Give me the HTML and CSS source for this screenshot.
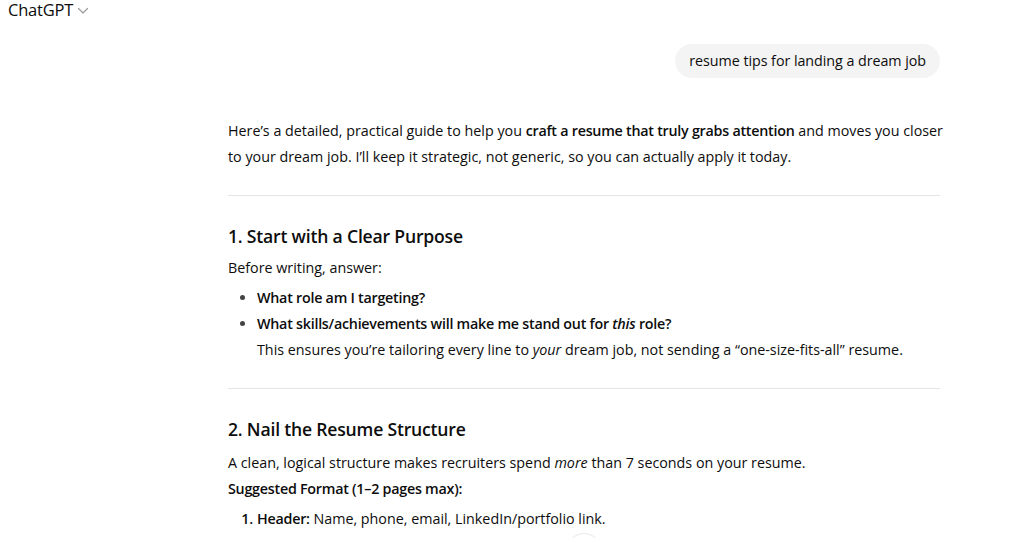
FILE: index.html
```html
<!DOCTYPE html>
<html lang="en">
<head>
<meta charset="utf-8">
<title>ChatGPT</title>
<link rel="stylesheet" href="styles.css">
</head>
<body>
<header class="topbar">
  <span class="brand">ChatGPT</span>
  <svg class="chev" width="12" height="8" viewBox="0 0 12 8"><path d="M1.5 1.5 L6 6 L10.5 1.5" fill="none" stroke="#9a9a9a" stroke-width="1.2" stroke-linecap="round" stroke-linejoin="round"/></svg>
</header>
<main class="thread">
  <div class="user-row"><div class="bubble">resume tips for landing a dream job</div></div>
  <article class="answer">
    <p class="intro">Here’s a detailed, practical guide to help you <strong>craft a resume that truly grabs attention</strong> and moves you closer to your dream job. I’ll keep it strategic, not generic, so you can actually apply it today.</p>
    <hr>
    <h3>1. Start with a Clear Purpose</h3>
    <p>Before writing, answer:</p>
    <ul>
      <li><strong>What role am I targeting?</strong></li>
      <li><strong>What skills/achievements will make me stand out for <em>this</em> role?</strong><br>This ensures you’re tailoring every line to <em>your</em> dream job, not sending a “one-size-fits-all” resume.</li>
    </ul>
    <hr>
    <h3 class="h2nd">2. Nail the Resume Structure</h3>
    <p>A clean, logical structure makes recruiters spend <em>more</em> than 7 seconds on your resume.<br><strong>Suggested Format (1–2 pages max):</strong></p>
    <ol>
      <li><strong>Header:</strong> Name, phone, email, LinkedIn/portfolio link.</li>
    </ol>
  </article>
</main>
<div class="scroll-btn"></div>
</body>
</html>
```
FILE: styles.css
```css
html, body {
  margin: 0;
  padding: 0;
  background: #ffffff;
  overflow: hidden;
  height: 538px;
}
body {
  font-family: "Open Sans", "Noto Sans", sans-serif;
  color: #0d0d0d;
  font-size: 14.3px;
  line-height: 26px;
  position: relative;
}
.topbar {
  display: flex;
  align-items: center;
  gap: 4px;
  padding: 0 0 0 8px;
  height: 20px;
}
.brand {
  font-size: 16.5px;
  color: #0d0d0d;
  line-height: 20px;
  letter-spacing: -0.2px;
}
.chev { margin-top: 2px; }
.thread {
  margin-left: 228px;
  width: 712px;
}
.user-row {
  display: flex;
  justify-content: flex-end;
  margin-top: 24px;
}
.bubble {
  background: #f4f4f4;
  border-radius: 18px;
  height: 34px;
  line-height: 34px;
  padding: 0 14px 0 14px;
  font-size: 14.3px;
  letter-spacing: -0.05px;
}
.answer { margin-top: 40px; }
.answer p { margin: 0; }
.intro {
  margin-right: -20px !important;
}
hr {
  border: 0;
  border-top: 1px solid #e5e5e5;
  margin: 25px 0 0 0;
  height: 0;
}
h3 {
  font-size: 17.6px;
  font-weight: 600;
  line-height: 28px;
  margin: 26px 0 5px 0;
  letter-spacing: -0.2px;
}
.h2nd { margin-bottom: 7px; }
ul, ol {
  margin: 4px 0 0 0;
  padding-left: 29px;
}
ul li::marker { color: #444; }
ol li::marker { font-weight: 600; }
strong { font-weight: 600; letter-spacing: -0.25px; }
.scroll-btn {
  position: absolute;
  left: 567px;
  top: 533px;
  width: 32px;
  height: 32px;
  border: 1px solid #e8e8e8;
  border-radius: 50%;
  background: #fff;
}
```
